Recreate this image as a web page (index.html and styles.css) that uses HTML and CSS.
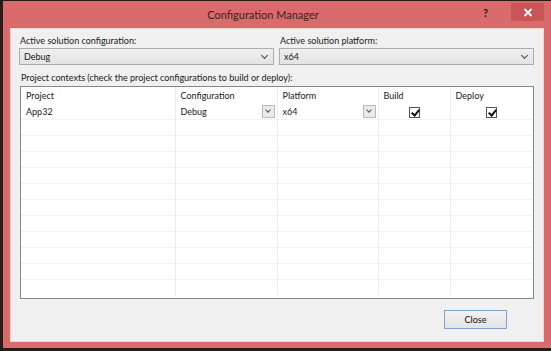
FILE: index.html
```html
<!DOCTYPE html>
<html lang="en">
  <head>
    <meta charset="UTF-8" />
    <title>Configuration Manager</title>
    <link rel="stylesheet" href="styles.css">
  </head>
  <body>
    <div class="window">
      <div class="titlebar">
        <span class="title">Configuration Manager</span>
        <span class="help">?</span>
        <span class="close-x">
          <svg width="10" height="9" viewBox="0 0 10 9"><path d="M1.5 1 L8.5 8 M8.5 1 L1.5 8" stroke="#fff" stroke-width="1.8"/></svg>
        </span>
      </div>
      <div class="client">
        <div class="fields">
          <div class="field">
            <label>Active solution configuration:</label>
            <div class="combo"><span>Debug</span><span class="chev"></span></div>
          </div>
          <div class="field">
            <label>Active solution platform:</label>
            <div class="combo"><span>x64</span><span class="chev"></span></div>
          </div>
        </div>
        <label class="contexts">Project contexts (check the project configurations to build or deploy):</label>
        <div class="grid-box">
          <table class="grid">
            <colgroup>
              <col style="width: 154px">
              <col style="width: 102px">
              <col style="width: 101px">
              <col style="width: 72px">
              <col>
            </colgroup>
            <thead>
              <tr><th>Project</th><th>Configuration</th><th>Platform</th><th>Build</th><th>Deploy</th></tr>
            </thead>
            <tbody id="rows">
              <tr>
                <td>App32</td>
                <td><div class="cell-combo"><span>Debug</span><span class="mini-btn"></span></div></td>
                <td><div class="cell-combo"><span>x64</span><span class="mini-btn"></span></div></td>
                <td class="center"><span class="check"></span></td>
                <td class="center"><span class="check"></span></td>
              </tr>
            </tbody>
          </table>
        </div>
        <div class="footer">
          <button class="close-btn">Close</button>
        </div>
      </div>
    </div>

    <script>
      // fill the empty rows below the project
      const rows = document.getElementById("rows");
      for (let i = 0; i < 11; i++) {
        const tr = document.createElement("tr");
        tr.innerHTML = "<td></td><td></td><td></td><td></td><td></td>";
        rows.appendChild(tr);
      }
    </script>
  </body>
</html>
```

FILE: styles.css
```css
html, body {
  margin: 0;
  padding: 0;
  width: 551px;
  height: 351px;
  overflow: hidden;
  background: #2b1a1a;
  font-family: Lato, "Open Sans", sans-serif;
  font-size: 9px;
  color: #1a1a1a;
}
.window {
  box-sizing: border-box;
  width: 548px;
  height: 347px;
  margin: 1px 0 0 3px;
  background-color: #d96b6c;
  display: flex;
  flex-direction: column;
  padding: 0 7px 6px 7px;
}
.titlebar {
  height: 27px;
  display: flex;
  align-items: center;
  justify-content: center;
  padding-right: 28px;
  position: relative;
}
.title {
  font-size: 11px;
  color: #3a2323;
}
.help {
  position: absolute;
  right: 56px;
  top: 5px;
  font-weight: bold;
  font-size: 11px;
  color: #2b1a1a;
}
.close-x {
  position: absolute;
  right: 0;
  top: 2px;
  width: 33px;
  height: 18px;
  background: #c95656;
  display: flex;
  align-items: center;
  justify-content: center;
}
.client {
  flex: 1;
  background: #f0f0f0;
  border: 1px solid #f3d2d2;
  padding: 5px 9px 0 8px;
  display: flex;
  flex-direction: column;
}
.fields {
  display: grid;
  grid-template-columns: 255px 1fr;
  gap: 5px;
}
.field label {
  display: block;
  height: 13px;
  line-height: 13px;
  margin-bottom: 1px;
  padding-left: 1px;
}
.combo {
  box-sizing: border-box;
  height: 17px;
  border: 1px solid #acacac;
  background: linear-gradient(#efefef, #e3e3e3);
  display: flex;
  align-items: center;
  justify-content: space-between;
  padding: 0 4px;
}
.chev {
  width: 4px;
  height: 4px;
  border-right: 1.3px solid #444;
  border-bottom: 1.3px solid #444;
  transform: rotate(45deg);
  margin: 0 2px 3px 0;
}
.contexts {
  display: block;
  height: 13px;
  line-height: 13px;
  margin: 6px 0 2px 2px;
}
.grid-box {
  box-sizing: border-box;
  height: 213px;
  margin-left: 1px;
  border: 1px solid #828790;
  background: #fff;
  overflow: hidden;
}
.grid {
  width: 100%;
  border-collapse: collapse;
  table-layout: fixed;
}
.grid th {
  height: 17px;
  font-weight: normal;
  text-align: left;
  padding: 0 5px;
  border-right: 1px solid #ececec;
}
.grid td {
  height: 15px;
  padding: 0 5px;
  border-right: 1px solid #ececec;
  border-top: 1px solid #f2f2f2;
}
.grid tr > :last-child {
  border-right: none;
}
.grid thead + tbody tr:first-child td {
  border-top: none;
}
.cell-combo {
  display: flex;
  align-items: center;
  justify-content: space-between;
}
.mini-btn {
  box-sizing: border-box;
  width: 13px;
  height: 13px;
  border: 1px solid #b9b9b9;
  background: #eaeaea;
  margin-right: -3px;
  position: relative;
}
.mini-btn::after {
  content: "";
  position: absolute;
  left: 3px;
  top: 2px;
  width: 3px;
  height: 3px;
  border-right: 1.3px solid #555;
  border-bottom: 1.3px solid #555;
  transform: rotate(45deg);
}
.center {
  text-align: center;
}
.check {
  display: inline-block;
  box-sizing: border-box;
  width: 11px;
  height: 11px;
  border: 1px solid #555;
  background: #fff;
  position: relative;
  vertical-align: middle;
}
.check::after {
  content: "";
  position: absolute;
  left: 3px;
  top: 0;
  width: 3px;
  height: 6px;
  border-right: 2px solid #111;
  border-bottom: 2px solid #111;
  transform: rotate(40deg);
}
.footer {
  display: flex;
  justify-content: flex-end;
  padding-top: 11px;
  padding-right: 27px;
}
.close-btn {
  box-sizing: border-box;
  width: 63px;
  height: 19px;
  font-family: inherit;
  font-size: 9px;
  color: #111;
  border: 1px solid #7ca4cf;
  background: linear-gradient(#f2f2f2, #e4e4e4);
  padding: 0;
}
```
